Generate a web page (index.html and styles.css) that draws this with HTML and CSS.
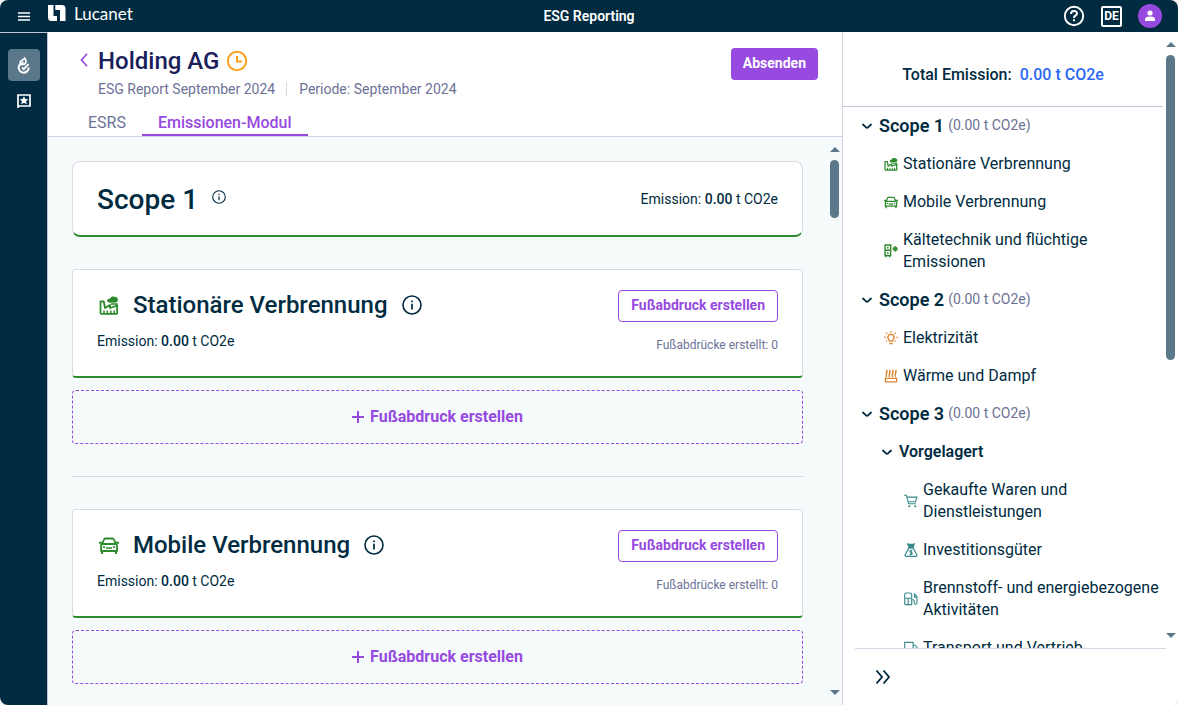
FILE: index.html
```html
<!DOCTYPE html>
<html lang="de">
<head>
<meta charset="utf-8">
<title>ESG Reporting</title>
<link rel="stylesheet" href="styles.css">
</head>
<body>
<svg class="sprite" aria-hidden="true">
  <symbol id="factory" viewBox="0 0 20 20"><path d="M1.500 18V6.500h3.300L6 13l5-3v3l7.200-2.500V18q0 .8-.8.800H2.300q-.8 0-.8-.8z" fill="none" stroke="currentColor" stroke-width="1.800" stroke-linejoin="round"/><path d="M5 18.500v-3M8.400 18.500v-3M11.800 18.500v-3M15.200 18.500v-3" stroke="currentColor" stroke-width="1.500"/><path d="M8.500 7C7.500 4.500 9.500 3.500 11 3.500 12 1.200 15 1 16.500 2c3 0 3.300 4.500.5 5.500l-6 .3z" fill="currentColor"/><path d="M12 9h6v4" fill="none" stroke="currentColor" stroke-width="1.500"/></symbol>
  <symbol id="car" viewBox="0 0 20 20"><path d="M2 10.500q0-1 1-1.500h14q1 .5 1 1.500V16H2zM3.200 9 5 4.500Q5.300 3.500 6.500 3.500h7q1.200 0 1.500 1L16.800 9" fill="none" stroke="currentColor" stroke-width="1.800" stroke-linejoin="round"/><path d="M0 7.800h3.500M16.500 7.800H20M3 15v4M17 15v4" stroke="currentColor" stroke-width="1.900"/><path d="M7 13h6M4 11.500l2 1M16 11.500l-2 1" fill="none" stroke="currentColor" stroke-width="1.500"/></symbol>
  <symbol id="fridge" viewBox="0 0 20 20"><path d="M1.500 1.500h8v15h-8zM1.500 9h8M3 16.500V19M8 16.500V19M5.500 4v2.500M5.500 11.500v2.500" fill="none" stroke="currentColor" stroke-width="2"/><path d="M16 3v8M12 7h8M13.500 4.500l5 5M18.500 4.500l-5 5" stroke="currentColor" stroke-width="1.700"/></symbol>
  <symbol id="bulb" viewBox="0 0 20 20"><path d="M7.800 14.500c0-2-2.300-2.700-2.300-5.200a4.500 4.500 0 0 1 9 0c0 2.500-2.300 3.200-2.300 5.200zM7.500 18h5" fill="none" stroke="currentColor" stroke-width="1.900"/><path d="M10 0v2.500M3 2.500l1.500 1.500M17 2.500 15.500 4M0 9h2.500M17.500 9H20M3 15l1.200-1M17 15l-1.200-1" stroke="currentColor" stroke-width="1.600"/></symbol>
  <symbol id="heat" viewBox="0 0 20 20"><path d="M3.500 11.500c-2-4 1.800-5.500.5-10.500M7.800 11.500c-2-4 1.800-5.500.5-10.500M12.100 11.500c-2-4 1.800-5.500.5-10.500M16.400 11.500c-2-4 1.800-5.500.5-10.500" fill="none" stroke="currentColor" stroke-width="2"/><path d="M1 13.500h18M2 13.500V18.500h16v-5" fill="none" stroke="currentColor" stroke-width="1.700"/></symbol>
  <symbol id="cart" viewBox="0 0 20 20"><path d="M0 1.800h3.500L6.500 14H17M4.500 4.500h14L16.500 11H6" fill="none" stroke="currentColor" stroke-width="1.600"/><circle cx="7.500" cy="17.500" r="1.600" fill="currentColor"/><circle cx="16" cy="17.500" r="1.600" fill="currentColor"/></symbol>
  <symbol id="bag" viewBox="0 0 20 20"><path d="M4 0l3 1h6l3-1-2.500 7.500h-7z" fill="currentColor"/><path d="M7 7h6l5.500 10q.5 2-1.500 2H3q-2 0-1.500-2zM12 11c-4-1-4.500 2-2 2.500 3 .6 2 4-2 2.800M10 9.500v8" fill="none" stroke="currentColor" stroke-width="1.700"/></symbol>
  <symbol id="pump" viewBox="0 0 20 20"><path d="M1 17V4q0-2.500 2.500-2.500h5Q11 1.500 11 4v14H2.500Q1 18 1 16.500M1 9h10M6 9v9M11 11h2q1.500 0 1.500 2v2.500q0 2 2 2t2-2V6.500L14 2M15 3v4.500h3.500" fill="none" stroke="currentColor" stroke-width="1.600"/></symbol>
  <symbol id="truck" viewBox="0 0 20 20"><path d="M1 2h12v13H1zM13 6h3l3.500 4.500V15H13" fill="none" stroke="currentColor" stroke-width="1.600"/><circle cx="5" cy="16" r="2" fill="currentColor"/><circle cx="15" cy="16" r="2" fill="currentColor"/></symbol>
  <symbol id="info" viewBox="0 0 20 20"><circle cx="10" cy="10" r="9" fill="none" stroke="currentColor" stroke-width="1.600"/><path d="M10 8.800V14.500M10 5.500v1.800" stroke="currentColor" stroke-width="1.700"/></symbol>
  <symbol id="chev" viewBox="0 0 12 12"><path d="M2 4.500 4.800 7.200Q6 8.200 7.200 7.200L10 4.500" fill="none" stroke="currentColor" stroke-width="1.800" stroke-linecap="round"/></symbol>
  <symbol id="plus" viewBox="0 0 12 12"><path d="M6 0v12M0 6h12" stroke="currentColor" stroke-width="2"/></symbol>
</svg>
<div class="app">
  <header class="topbar">
    <div class="brand">
      <button class="icon-btn menu" aria-label="Menü"><svg width="12" height="9" viewBox="0 0 12 9"><path d="M0 1h12M0 4.500h12M0 8h12" stroke="currentColor" stroke-width="1.600"/></svg></button>
      <svg class="logo" width="18" height="17" viewBox="0 0 18 17"><path d="M0 0h5.500v11H9v5H3.500Q0 16 0 12.500zM7.300 0H14q3.500 0 3.500 3.500V16H12V5H7.300z" fill="currentColor"/></svg>
      <span class="brand-name">Lucanet</span>
    </div>
    <div class="app-title">ESG Reporting</div>
    <div class="top-actions">
      <button class="icon-btn" aria-label="Hilfe"><svg width="22" height="22" viewBox="0 0 22 22"><circle cx="11" cy="11" r="9.200" fill="none" stroke="currentColor" stroke-width="1.900"/><path d="M8 9c0-4 6-4 6-.6 0 2-3 2-3 4.500M11 14.300v2" fill="none" stroke="currentColor" stroke-width="2"/></svg></button>
      <button class="icon-btn lang" aria-label="Sprache">DE</button>
      <button class="icon-btn avatar" aria-label="Profil"><svg width="10" height="12" viewBox="0 0 10 12"><circle cx="5" cy="3" r="2.600" fill="currentColor"/><path d="M0 11V9.500Q0 6.500 5 6.500T10 9.500V11z" fill="currentColor"/></svg></button>
    </div>
  </header>
  <div class="body">
    <nav class="rail" aria-label="Module">
      <button class="rail-btn active" aria-label="ESG"><svg width="16" height="18" viewBox="0 0 16 18"><path d="M3.800 8.500a5 5 0 1 0 8.900 3" fill="none" stroke="currentColor" stroke-width="2"/><path d="M4.500 8.500C2.500 4 7.500 5 8.500 2.200c2.500 2.300 1.500 6.300-1.500 6.300z" fill="none" stroke="currentColor" stroke-width="1.700"/><path d="M4.500 9 7.500 6M6 11.500l1.800 1.700 4.700-5" fill="none" stroke="currentColor" stroke-width="1.800"/></svg></button>
      <button class="rail-btn" aria-label="Bewertung"><svg width="14" height="14" viewBox="0 0 14 14"><path d="M1 13V1h12v11H2.500z" fill="none" stroke="currentColor" stroke-width="1.700"/><path d="m7 2.200 1.300 2.700 3 .3-2.200 2 .7 3L7 8.700l-2.800 1.500.7-3-2.200-2 3-.3z" fill="currentColor"/></svg></button>
    </nav>
    <main class="main">
      <section class="page-head">
        <div class="head-row">
          <button class="icon-btn back" aria-label="Zurück"><svg width="8" height="14" viewBox="0 0 8 14"><path d="M7 .8 1.500 7 7 13.200" fill="none" stroke="currentColor" stroke-width="1.700"/></svg></button>
          <div class="head-text">
            <div class="title-row">
              <h1>Holding AG</h1>
              <svg class="clock" width="22" height="22" viewBox="0 0 22 22"><circle cx="11" cy="11" r="9.200" fill="none" stroke="currentColor" stroke-width="2"/><path d="M11 6v5.500H16" fill="none" stroke="currentColor" stroke-width="2"/></svg>
            </div>
            <div class="meta"><span>ESG Report September 2024</span><span class="period">Periode: September 2024</span></div>
          </div>
          <button class="primary">Absenden</button>
        </div>
        <div class="tabs">
          <a class="tab" href="#esrs">ESRS</a>
          <a class="tab active" href="#emissionen">Emissionen-Modul</a>
        </div>
      </section>
      <section class="scroll-area">
        <div class="content">
          <div class="card scope-card">
            <div class="scope-title"><h2>Scope 1</h2><svg class="info-sm"><use href="#info"/></svg></div>
            <p class="emission">Emission: <b>0.00</b> t CO2e</p>
          </div>
          <article class="block">
            <div class="card cat-card">
              <div class="cat-left">
                <div class="cat-title"><svg class="cat-icon"><use href="#factory"/></svg><h3>Stationäre Verbrennung</h3><svg class="info-lg"><use href="#info"/></svg></div>
                <p class="emission">Emission: <b>0.00</b> t CO2e</p>
              </div>
              <div class="cat-right"><button class="outline">Fußabdruck erstellen</button><p class="count">Fußabdrücke erstellt: 0</p></div>
            </div>
            <button class="add"><svg class="plus"><use href="#plus"/></svg>Fußabdruck erstellen</button>
          </article>
          <hr>
          <article class="block">
            <div class="card cat-card">
              <div class="cat-left">
                <div class="cat-title"><svg class="cat-icon"><use href="#car"/></svg><h3>Mobile Verbrennung</h3><svg class="info-lg"><use href="#info"/></svg></div>
                <p class="emission">Emission: <b>0.00</b> t CO2e</p>
              </div>
              <div class="cat-right"><button class="outline">Fußabdruck erstellen</button><p class="count">Fußabdrücke erstellt: 0</p></div>
            </div>
            <button class="add"><svg class="plus"><use href="#plus"/></svg>Fußabdruck erstellen</button>
          </article>
        </div>
        <div class="bar bar-main" aria-hidden="true"><i class="up"></i><i class="thumb"></i><i class="down"></i></div>
      </section>
    </main>
    <aside class="side">
      <div class="side-scroll">
        <div class="side-content">
          <div class="total"><span>Total Emission:</span><span class="total-value">0.00 t CO2e</span></div>
          <ul class="tree">
            <li class="row scope"><button class="icon-btn" aria-label="Scope 1 einklappen"><svg class="chev"><use href="#chev"/></svg></button><b>Scope 1</b><small>(0.00 t CO2e)</small></li>
            <li class="row item green"><svg class="ico"><use href="#factory"/></svg><span>Stationäre Verbrennung</span></li>
            <li class="row item green"><svg class="ico"><use href="#car"/></svg><span>Mobile Verbrennung</span></li>
            <li class="row item green"><svg class="ico"><use href="#fridge"/></svg><span>Kältetechnik und flüchtige Emissionen</span></li>
            <li class="row scope"><button class="icon-btn" aria-label="Scope 2 einklappen"><svg class="chev"><use href="#chev"/></svg></button><b>Scope 2</b><small>(0.00 t CO2e)</small></li>
            <li class="row item orange"><svg class="ico"><use href="#bulb"/></svg><span>Elektrizität</span></li>
            <li class="row item orange"><svg class="ico"><use href="#heat"/></svg><span>Wärme und Dampf</span></li>
            <li class="row scope"><button class="icon-btn" aria-label="Scope 3 einklappen"><svg class="chev"><use href="#chev"/></svg></button><b>Scope 3</b><small>(0.00 t CO2e)</small></li>
            <li class="row scope sub"><button class="icon-btn" aria-label="Vorgelagert einklappen"><svg class="chev"><use href="#chev"/></svg></button><b>Vorgelagert</b></li>
            <li class="row item deep"><svg class="ico"><use href="#cart"/></svg><span>Gekaufte Waren und Dienstleistungen</span></li>
            <li class="row item deep"><svg class="ico"><use href="#bag"/></svg><span>Investitionsgüter</span></li>
            <li class="row item deep"><svg class="ico"><use href="#pump"/></svg><span>Brennstoff- und energiebezogene Aktivitäten</span></li>
            <li class="row item deep"><svg class="ico"><use href="#truck"/></svg><span>Transport und Vertrieb</span></li>
          </ul>
        </div>
        <div class="bar bar-side" aria-hidden="true"><i class="up"></i><i class="thumb"></i><i class="down"></i></div>
      </div>
      <div class="side-foot"><button class="icon-btn" aria-label="Einklappen"><svg width="16" height="16" viewBox="0 0 16 16"><path d="M1.500 1.500 7 8l-5.500 6.500M8.500 1.500 14 8l-5.500 6.500" fill="none" stroke="currentColor" stroke-width="1.900"/></svg></button></div>
    </aside>
  </div>
</div>
</body>
</html>
```
FILE: styles.css
```css
* { box-sizing: border-box; }
body { margin: 0; background: #f3f3f3; font-family: Roboto, "Liberation Sans", sans-serif; font-size: 16px; color: #002b41; }
h1, h2, h3, p, ul { margin: 0; padding: 0; }
button { font: inherit; cursor: pointer; }
svg { display: block; flex: none; }
.sprite { position: absolute; width: 0; height: 0; }
.icon-btn { display: flex; align-items: center; justify-content: center; flex: none; border: 0; padding: 0; background: none; color: inherit; }

.app { height: 100vh; display: flex; flex-direction: column; overflow: hidden; border-radius: 8px; background: #fff; }

.topbar { flex: none; height: 32px; display: grid; grid-template-columns: 1fr auto 1fr; align-items: center; padding: 0 16px; background: #002b41; color: #fff; }
.brand { display: flex; align-items: center; }
.menu { width: 16px; }
.logo { margin: 0 8px 6px 16px; }
.brand-name { font: 17px/24px Lato, sans-serif; padding-bottom: 4px; }
.app-title { font-size: 14px; font-weight: 600; }
.top-actions { display: flex; align-items: center; justify-content: flex-end; gap: 16px; }
.lang { width: 21px; height: 21px; border: 2px solid #fff; border-radius: 2px; font-size: 12px; font-weight: 700; }
.avatar { width: 24px; height: 24px; border-radius: 50%; background: #974adf; }

.body { flex: 1; min-height: 0; display: flex; }
.rail { flex: none; width: 48px; display: flex; flex-direction: column; align-items: center; gap: 4px; padding-top: 16px; background: #002b41; border-top: 1px solid #c3c3d8; border-right: 1px solid #c3c3d8; }
.rail-btn { width: 32px; height: 32px; display: flex; align-items: center; justify-content: center; padding: 0; border: 0; border-radius: 4px; background: none; color: #fff; }
.rail-btn.active { background: #5a788a; }

.main { flex: 1; min-width: 0; display: flex; flex-direction: column; }
.page-head { flex: none; border-bottom: 1px solid #cfcfe0; }
.head-row { display: flex; align-items: flex-start; padding: 12px 24px 0 32px; }
.back { width: 8px; height: 32px; color: #974adf; }
.head-text { flex: 1; padding-left: 10px; }
.title-row { display: flex; align-items: center; gap: 7px; }
h1 { font-size: 24px; line-height: 34px; font-weight: 500; color: #1a2059; }
.clock { color: #f9a11b; }
.meta { display: flex; font-size: 14px; line-height: 14px; padding-top: 4px; color: #6c7296; }
.period { margin-left: 11px; padding-left: 12px; border-left: 1px solid #d6d6e4; }
.primary { height: 32px; margin-top: 4px; padding: 0 12px 2px; border: 0; border-radius: 4px; background: #974adf; color: #fff; font-size: 14px; font-weight: 700; }
.tabs { display: flex; padding: 16px 24px 0; }
.tab { padding: 0 16px; line-height: 22px; color: #6c7296; text-decoration: none; border-bottom: 2px solid transparent; }
.tab.active { color: #974adf; border-color: #974adf; font-weight: 500; }

.scroll-area { flex: 1; min-height: 0; display: flex; background: #f5fafb; }
.content { flex: 1; min-width: 0; overflow: hidden; padding: 24px; display: flex; flex-direction: column; gap: 32px; }
.card { background: #fff; border: 1px solid #dadae5; border-bottom: 2px solid #2d8b2d; display: flex; justify-content: space-between; padding: 0 24px; }
.scope-card { flex: none; height: 76px; align-items: center; border-radius: 8px; }
.scope-title { display: flex; gap: 14px; padding-top: 2px; }
h2 { font-size: 28px; line-height: 32px; font-weight: 500; }
.info-sm { width: 14px; height: 14px; margin-top: 6px; }
.info-lg { width: 20px; height: 20px; margin-left: 14px; }
.emission { font-size: 14px; line-height: 20px; }
.emission b { font-weight: 500; }
.block { flex: none; display: flex; flex-direction: column; gap: 12px; }
.cat-card { height: 109px; padding-top: 20px; border-radius: 4px; }
.cat-title { display: flex; align-items: center; }
.cat-icon { width: 20px; height: 20px; margin: 0 14px 0 2px; color: #2d8b2d; }
h3 { font-size: 24px; line-height: 30px; font-weight: 500; }
.cat-left .emission { margin-top: 11px; }
.cat-right { display: flex; flex-direction: column; align-items: flex-end; }
.outline { height: 32px; padding: 0 12px 2px; border: 1px solid #974adf; border-radius: 4px; background: #fff; color: #974adf; font-size: 14px; font-weight: 700; }
.count { margin-top: 15px; font-size: 12px; line-height: 16px; color: #6c7296; }
.add { height: 54px; padding-bottom: 2px; display: flex; align-items: center; justify-content: center; gap: 6px; border: 1px dashed #974adf; border-radius: 4px; background: none; color: #974adf; font-weight: 700; }
.plus { width: 12px; height: 12px; }
hr { width: 100%; height: 1px; flex: none; margin: 0; border: 0; background: #dadae5; }

.bar { flex: none; width: 15px; display: flex; flex-direction: column; align-items: center; }
.up, .down { flex: none; width: 0; height: 0; border: 5px solid transparent; border-top-width: 0; border-bottom: 5px solid #5a788a; }
.down { border-bottom-width: 0; border-top: 5px solid #5a788a; margin-top: auto; }
.thumb { flex: none; width: 9px; border-radius: 5px; background: #5a788a; margin-top: 8px; }
.bar-main { padding: 10px 0; }
.bar-main .thumb { height: 58px; }
.bar-side { padding: 10px 0; }
.bar-side .thumb { height: 305px; }

.side { flex: none; width: 336px; display: flex; flex-direction: column; border-left: 1px solid #d6d6e4; background: #fff; }
.side-scroll { flex: 1; min-height: 0; display: flex; }
.side-content { flex: 1; min-width: 0; overflow: hidden; }
.total { height: 75px; display: flex; align-items: center; justify-content: center; gap: 8px; padding-top: 10px; border-bottom: 1px solid #c3c3d8; font-weight: 500; }
.total-value { color: #2d68f5; }
.tree { list-style: none; }
.row { display: flex; align-items: center; padding: 8px 0; line-height: 22px; }
.scope { padding-left: 18px; gap: 6px; }
.scope b { font-size: 18px; font-weight: 600; }
.scope small { font-size: 14px; margin-left: -2px; padding-bottom: 2px; line-height: 20px; color: #6c7296; }
.sub { padding-left: 38px; }
.sub b { font-size: 16px; }
.chev { width: 12px; height: 12px; }
.item { padding-left: 41px; gap: 5px; }
.ico { width: 14px; height: 14px; }
.green .ico { color: #2d8b2d; }
.orange .ico { color: #db802b; }
.deep { padding-left: 61px; }
.deep .ico { color: #398a8a; }
.side-foot { flex: none; height: 57px; display: flex; align-items: center; margin: 0 12px; padding-left: 20px; border-top: 1px solid #d6d6e4; }
```
